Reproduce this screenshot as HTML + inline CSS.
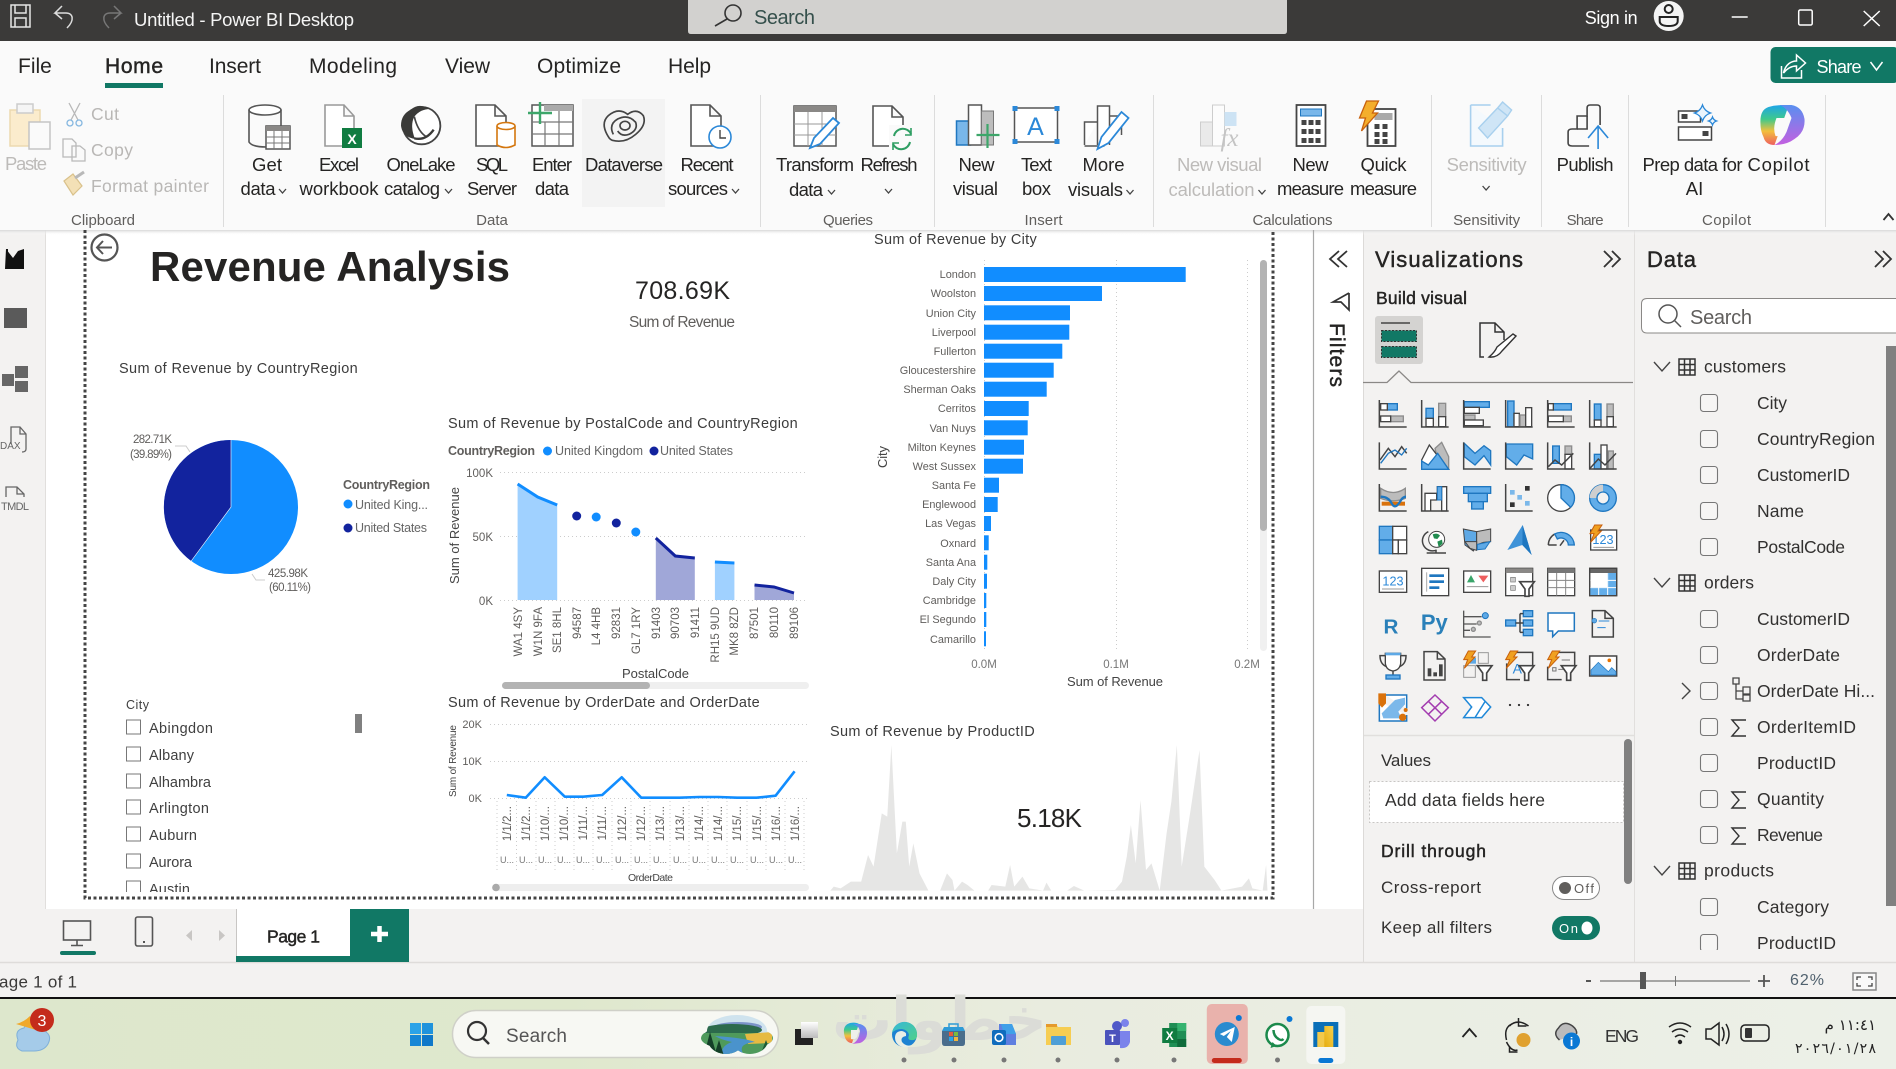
<!DOCTYPE html>
<html lang="en"><head><meta charset="utf-8"><title>Untitled - Power BI Desktop</title>
<style>
html,body{margin:0;padding:0;width:1896px;height:1069px;overflow:hidden;background:#fff}
svg{display:block;position:absolute;left:0;top:0}
text{font-family:"Liberation Sans",sans-serif;fill:#252423}
.tab{font-size:21px;fill:#252423}
.rb{font-size:18.5px;fill:#252423;text-anchor:middle;transform:translateY(-1px)}
.rg{font-size:18.5px;fill:#bdbbb9;text-anchor:middle;transform:translateY(-1px)}
.gl{font-size:15px;fill:#605e5c;text-anchor:middle}
.ttl{font-size:14.5px;fill:#3c3c3c;letter-spacing:.3px}
.ax{font-size:11.5px;fill:#605e5c}
.axe{font-size:11.5px;fill:#605e5c;text-anchor:end}
.cy{font-size:10.9px;fill:#605e5c;text-anchor:end}
.axm{font-size:11.5px;fill:#777;text-anchor:middle}
.sl{font-size:14.5px;fill:#404040}
.tr{font-size:17.5px;fill:#323130}
.sem{stroke:#252423;stroke-width:.45px}
.grid{stroke:#ccc;stroke-width:1;stroke-dasharray:1 3;fill:none}
.k{fill:none;stroke:#444;stroke-width:4.5}
.w{fill:#fff;stroke:#444;stroke-width:4}
.u{fill:#62ade9;stroke:#1f77c0;stroke-width:4}
.g{fill:#bcbcbc;stroke:#8d8d8d;stroke-width:4}
.ic{fill:none;stroke:#555;stroke-width:1.6}
.cb{fill:#f6f5f4;stroke:#777;stroke-width:1.1}
.chev{fill:none;stroke:#444;stroke-width:1.3}
</style></head>
<body>
<svg width="1896" height="1069" viewBox="0 0 1896 1069" xmlns="http://www.w3.org/2000/svg">
<defs>
<linearGradient id="tb" x1="0" x2="1" y1="0" y2="0"><stop offset="0" stop-color="#dde7cc"/><stop offset=".3" stop-color="#dfe8cd"/><stop offset=".55" stop-color="#e9ecdf"/><stop offset="1" stop-color="#ecf0e8"/></linearGradient>
<linearGradient id="sh" x1="0" x2="0" y1="0" y2="1"><stop offset="0" stop-color="#d8d8d8"/><stop offset="1" stop-color="#ffffff" stop-opacity="0"/></linearGradient>
<linearGradient id="cop" x1="0" x2="0" y1="0" y2="1"><stop offset="0" stop-color="#1fa5e8"/><stop offset=".35" stop-color="#3fc98c"/><stop offset=".65" stop-color="#f2c03d"/><stop offset="1" stop-color="#ee5f5f"/></linearGradient>
<linearGradient id="cop2" x1="0" x2="0" y1="0" y2="1"><stop offset="0" stop-color="#5a8ff0"/><stop offset="1" stop-color="#c45fe0"/></linearGradient>
<linearGradient id="edge" x1="0" x2="1" y1="0" y2="1"><stop offset="0" stop-color="#35b8d8"/><stop offset="1" stop-color="#4fd08a"/></linearGradient>
<linearGradient id="pbi" x1="0" x2="1" y1="1" y2="0"><stop offset="0" stop-color="#e6ad10"/><stop offset="1" stop-color="#f6d04d"/></linearGradient>
<linearGradient id="tv" x1="0" x2="0" y1="0" y2="1"><stop offset="0" stop-color="#fff"/><stop offset="1" stop-color="#bbb"/></linearGradient>
<clipPath id="scn"><ellipse cx="737" cy="1038" rx="36" ry="12"/><ellipse cx="737" cy="1031" rx="30" ry="16"/><ellipse cx="726" cy="1040" rx="18" ry="14"/><ellipse cx="750" cy="1040" rx="18" ry="14"/></clipPath>
<clipPath id="sl"><rect x="100" y="700" width="270" height="192"/></clipPath>
<clipPath id="trc"><rect x="1640" y="340" width="246" height="610"/></clipPath>
<g id="fn"><path d="M0 0H44L28 22V44H16V22Z" fill="#fff" stroke="#444" stroke-width="5"/></g>
<g id="bolt"><path d="M20 0H42L30 18H40L8 52L18 26H6Z" fill="#f0a020" stroke="#c8600c" stroke-width="3"/></g>
<polyline id="ch" points="0,0 3.5,4 7,0" class="chev"/>
</defs>

<!-- base panels -->
<rect x="0" y="0" width="1896" height="1069" fill="#fff"/>
<rect x="0" y="230" width="45" height="732" fill="#f3f2f1"/><line x1="45.5" y1="230" x2="45.5" y2="962" stroke="#e1dfdd"/>
<rect x="45" y="909" width="1319" height="53" fill="#f3f2f1"/>
<rect x="1364" y="230" width="270" height="732" fill="#f3f2f1"/><line x1="1363.5" y1="230" x2="1363.5" y2="962" stroke="#dcdad8"/>
<rect x="1634" y="230" width="262" height="732" fill="#f3f2f1"/><line x1="1634.5" y1="230" x2="1634.5" y2="962" stroke="#e1dfdd"/>
<rect x="0" y="962" width="1896" height="36" fill="#f3f2f1"/><line x1="0" y1="962.5" x2="1896" y2="962.5" stroke="#dedcda" stroke-width="1.5"/>
<rect x="0" y="997" width="1896" height="2" fill="#111"/>
<rect x="0" y="999" width="1896" height="70" fill="url(#tb)"/>

<!-- title bar -->
<rect x="0" y="0" width="1896" height="41" fill="#3b3a39"/>
<path d="M11 5H30V27H11Z M15 5V13H26V5 M15 27V18H26V27" fill="none" stroke="#e6e6e6" stroke-width="1.5"/>
<path d="M62 6L55 13H66C73 13 75 20 67 28M55 13L62 19" fill="none" stroke="#ddd" stroke-width="1.5"/>
<path d="M114 6L121 13H110C103 13 101 20 109 28M121 13L114 19" fill="none" stroke="#777" stroke-width="1.5"/>
<text x="134" y="26" font-size="18.5" textLength="220" style="fill:#f5f5f5">Untitled - Power BI Desktop</text>
<path d="M688 0H1287V31Q1287 34 1284 34H691Q688 34 688 31Z" fill="#d2d1cf"/>
<circle cx="733" cy="13" r="8" fill="none" stroke="#333" stroke-width="1.6"/><line x1="727" y1="19" x2="715" y2="26" stroke="#333" stroke-width="1.6"/>
<text x="754" y="24" font-size="20" textLength="61" style="fill:#35504c">Search</text>
<g transform="translate(-3.3,0)">
<text x="1588" y="24" font-size="18" textLength="53" style="fill:#fff">Sign in</text>
<circle cx="1672" cy="16" r="15" fill="#f4f4f4"/><circle cx="1672" cy="9" r="4" fill="none" stroke="#222" stroke-width="2"/><path d="M1663 17H1681V21Q1681 26 1672 26Q1663 26 1663 21Z" fill="none" stroke="#222" stroke-width="2"/>
<line x1="1735" y1="17" x2="1751" y2="17" stroke="#fff" stroke-width="1.5"/>
<rect x="1802" y="10" width="13.5" height="15" rx="1.5" fill="none" stroke="#fff" stroke-width="1.5"/>
<path d="M1867 11L1883 26M1883 11L1867 26" stroke="#fff" stroke-width="1.5"/>
</g>

<!-- ribbon -->
<rect x="0" y="41" width="1896" height="189" fill="#fafafa"/>
<text x="18" y="73" class="tab">File</text>
<text x="105" y="73" class="tab sem" textLength="58">Home</text>
<rect x="105" y="83" width="58" height="5" fill="#117865"/>
<text x="209" y="73" class="tab" textLength="52">Insert</text>
<text x="309" y="73" class="tab" textLength="88">Modeling</text>
<text x="445" y="73" class="tab" textLength="45">View</text>
<text x="537" y="73" class="tab" textLength="84">Optimize</text>
<text x="668" y="73" class="tab" textLength="43">Help</text>
<g transform="translate(-3.5,0)">
<rect x="1774" y="47" width="128" height="36" rx="5" fill="#117865"/>
<path d="M1785 66V78H1805V70M1787 73C1789 64 1795 61 1800 61V55L1809 63L1800 71V66C1795 66 1791 68 1787 73Z" fill="none" stroke="#fff" stroke-width="1.5"/>
<text x="1820" y="73" font-size="18" textLength="45" style="fill:#fff">Share</text>
<path d="M1874 62L1880 70L1886 62" fill="none" stroke="#fff" stroke-width="1.5"/>
</g>

<g stroke="#dcdcdc"><line x1="223.5" y1="95" x2="223.5" y2="227"/><line x1="760.5" y1="95" x2="760.5" y2="227"/><line x1="934.5" y1="95" x2="934.5" y2="227"/><line x1="1153.5" y1="95" x2="1153.5" y2="227"/><line x1="1431.5" y1="95" x2="1431.5" y2="227"/><line x1="1541.5" y1="95" x2="1541.5" y2="227"/><line x1="1628.5" y1="95" x2="1628.5" y2="227"/><line x1="1825.5" y1="95" x2="1825.5" y2="227"/></g>
<rect x="582" y="99" width="83" height="108" fill="#f3f3f3"/>

<!-- clipboard -->
<rect x="10" y="110" width="30" height="36" fill="#fbeccd" stroke="#ecd9b0" stroke-width="1.5"/><rect x="17" y="104" width="16" height="9" fill="#f5f5f5" stroke="#ccc" stroke-width="1.5"/><rect x="29" y="122" width="21" height="27" fill="#fafafa" stroke="#c4c4c4" stroke-width="1.5"/>
<text x="26" y="171" class="rg" textLength="42">Paste</text>
<path d="M69 103L78 120M80 103L71 120" stroke="#b8b8b8" stroke-width="1.3" fill="none"/><circle cx="70" cy="123" r="3" fill="none" stroke="#85b7e0" stroke-width="1.3"/><circle cx="79" cy="123" r="3" fill="none" stroke="#85b7e0" stroke-width="1.3"/>
<text x="91" y="120" font-size="17.5" textLength="28" style="fill:#b9b7b5">Cut</text>
<path d="M63 139H72L76 143V157H63Z M72 146H80L85 150V161H72Z" fill="#fafafa" stroke="#b9b9b9" stroke-width="1.3"/>
<text x="91" y="156" font-size="17.5" textLength="42" style="fill:#b9b7b5">Copy</text>
<path d="M64 181L73 174L82 186L73 195Z" fill="#f3e0b6" stroke="#d9c18b" stroke-width="1.2"/><path d="M75 178L84 172" stroke="#b8b8b8" stroke-width="3"/>
<text x="91" y="192" font-size="17.5" textLength="118" style="fill:#b9b7b5">Format painter</text>
<text x="103" y="225" class="gl" textLength="64">Clipboard</text>

<!-- Get data -->
<ellipse cx="265" cy="110" rx="16" ry="5" fill="#fff" stroke="#555" stroke-width="1.6"/><path d="M249 110V142Q252 147 266 147M281 110V126" fill="none" stroke="#555" stroke-width="1.6"/>
<rect x="266" y="126" width="24" height="23" fill="#fff" stroke="#555" stroke-width="1.5"/><rect x="266" y="126" width="24" height="5" fill="#8a8886"/><path d="M274 131V149M282 131V149M266 137H290M266 143H290" stroke="#777"/>
<text x="267" y="172" class="rb" textLength="30">Get</text><text x="258" y="196" class="rb" textLength="35">data</text><use href="#ch" x="279" y="189"/>
<!-- Excel -->
<path d="M325 105H344L354 116V146H325Z M344 105V116H354" fill="#fff" stroke="#999" stroke-width="1.6"/><rect x="342" y="128" width="20" height="20" fill="#107c41"/><text x="352" y="144" font-size="14" font-weight="bold" text-anchor="middle" style="fill:#fff">X</text>
<text x="339" y="172" class="rb" textLength="40">Excel</text><text x="339" y="196" class="rb" textLength="79">workbook</text>
<!-- OneLake -->
<g transform="translate(395,95) scale(.33333)">
<circle cx="80" cy="92" r="56" fill="#fff" stroke="#444" stroke-width="5.5"/>
<path d="M18 92Q18 58 48 44Q70 22 106 42Q76 42 58 65Q44 92 60 132Q22 126 18 92Z" fill="#3a3a38"/>
<path d="M58 65Q68 108 92 124" fill="none" stroke="#444" stroke-width="5"/><path d="M58 130Q92 138 116 104" fill="none" stroke="#3a3a38" stroke-width="7"/>
</g>
<text x="421" y="172" class="rb" textLength="69">OneLake</text><text x="412" y="196" class="rb" textLength="56">catalog</text><use href="#ch" x="445" y="189"/>
<!-- SQL -->
<path d="M476 105H495L506 116V146H476Z M495 105V116H506" fill="#fff" stroke="#555" stroke-width="1.6"/><path d="M497 126V145Q506 150 515 145V126" fill="#fff" stroke="#d4770f" stroke-width="1.6"/><ellipse cx="506" cy="126" rx="9" ry="3.500" fill="#fff" stroke="#d4770f" stroke-width="1.6"/>
<text x="492" y="172" class="rb" textLength="32">SQL</text><text x="492" y="196" class="rb" textLength="50">Server</text>
<!-- Enter data -->
<rect x="532" y="105" width="41" height="41" fill="#fff" stroke="#555" stroke-width="1.5"/><rect x="544" y="105" width="29" height="6" fill="#aaa"/><path d="M545 122V146M559 111V146M532 122H573M532 134H573" stroke="#777" stroke-width="1.2"/>
<path d="M528 113H552M540 102V124" stroke="#3da66a" stroke-width="2.4"/>
<text x="552" y="172" class="rb" textLength="40">Enter</text><text x="552" y="196" class="rb" textLength="34">data</text>
<!-- Dataverse -->
<g transform="translate(395,95) scale(.33333)" fill="none" stroke="#444" stroke-width="5">
<path d="M640 125Q615 85 640 62Q670 36 698 58Q725 38 745 62Q756 90 722 118Q690 146 652 136Q644 133 640 125Z"/>
<path d="M655 118Q640 88 668 72Q700 56 722 82Q730 105 702 118Q680 126 668 108"/><ellipse cx="690" cy="92" rx="15" ry="13"/>
</g>
<text x="624" y="172" class="rb" textLength="78">Dataverse</text>
<!-- Recent -->
<path d="M691 105H710L721 116V146H691Z M710 105V116H721" fill="#fff" stroke="#555" stroke-width="1.6"/><circle cx="720" cy="137" r="11" fill="#fff" stroke="#2b88d8" stroke-width="1.6"/><path d="M720 130V138H726" fill="none" stroke="#444" stroke-width="1.4"/>
<text x="707" y="172" class="rb" textLength="53">Recent</text><text x="698" y="196" class="rb" textLength="60">sources</text><use href="#ch" x="732" y="189"/>
<text x="492" y="225" class="gl">Data</text>
<!-- Transform -->
<rect x="794" y="106" width="42" height="40" fill="#fff" stroke="#555" stroke-width="1.5"/><rect x="794" y="106" width="42" height="6" fill="#8a8886"/><path d="M808 112V146M822 112V146M794 124H836M794 135H836" stroke="#999"/>
<path d="M810 148L814 138L833 118L839 123L820 144Z" fill="#fff" stroke="#2b88d8" stroke-width="1.8"/>
<text x="815" y="172" class="rb" textLength="78">Transform</text><text x="806" y="197" class="rb" textLength="34">data</text><use href="#ch" x="828" y="190"/>
<!-- Refresh -->
<path d="M873 106H892L903 117V146H873Z M892 106V117H903" fill="#fff" stroke="#555" stroke-width="1.6"/><rect x="889" y="125" width="26" height="26" fill="#fafafa"/><path d="M894 136A9 9 0 0 1 911 134M910 142A9 9 0 0 1 893 144" fill="none" stroke="#2f9e63" stroke-width="2"/><path d="M911 128V135H905M893 150V143H899" fill="none" stroke="#2f9e63" stroke-width="1.6"/>
<text x="889" y="172" class="rb" textLength="57">Refresh</text><use href="#ch" x="885" y="189"/>
<text x="848" y="225" class="gl" textLength="50">Queries</text>
<!-- Insert group -->
<g transform="translate(-.5,0)">
<rect x="957" y="121" width="14" height="24" fill="#79b7ea" stroke="#1f77c0" stroke-width="1.5"/><rect x="969" y="105" width="13" height="40" fill="#fff" stroke="#555" stroke-width="1.5"/><rect x="982" y="111" width="12" height="34" fill="#bdbdbd" stroke="#777" stroke-width="1"/><path d="M977 135H1000M988 124V148" stroke="#3da66a" stroke-width="2.2"/>
<text x="977" y="172" class="rb" textLength="36">New</text><text x="976" y="196" class="rb" textLength="45">visual</text>
<rect x="1015" y="108" width="43" height="34" fill="#fff" stroke="#555" stroke-width="1.5"/><g fill="#2b88d8"><rect x="1013" y="106" width="5" height="5"/><rect x="1055" y="106" width="5" height="5"/><rect x="1013" y="139" width="5" height="5"/><rect x="1055" y="139" width="5" height="5"/></g><text x="1036" y="135" font-size="25" text-anchor="middle" style="fill:#2b88d8">A</text>
<text x="1037" y="172" class="rb" textLength="31">Text</text><text x="1037" y="196" class="rb" textLength="29">box</text>
<path d="M1085 145V122H1098M1098 145V106H1110V145M1110 116H1122V135M1085 146H1105" fill="#fff" stroke="#555" stroke-width="1.5"/><path d="M1098 149L1102 137L1122 112L1129 118L1109 143Z" fill="#fff" stroke="#2b88d8" stroke-width="1.8"/>
<text x="1104" y="172" class="rb" textLength="42">More</text><text x="1096" y="197" class="rb" textLength="55">visuals</text><use href="#ch" x="1127" y="190"/>
<text x="1044" y="225" class="gl" textLength="38">Insert</text>
</g>
<!-- Calculations group -->
<g transform="translate(-1.5,0)">
<g opacity=".55"><rect x="1202" y="122" width="12" height="24" fill="#ddd" stroke="#aaa"/><rect x="1214" y="105" width="12" height="41" fill="#fff" stroke="#aaa"/><rect x="1226" y="112" width="12" height="14" fill="#a9d2f0"/><text x="1231" y="146" font-size="25" font-style="italic" text-anchor="middle" style="fill:#999;font-family:'Liberation Serif',serif">fx</text></g>
<text x="1221" y="172" class="rg" textLength="85">New visual</text><text x="1213" y="197" class="rg" textLength="86">calculation</text><use href="#ch" x="1260" y="190" style="stroke:#bbb"/>
<rect x="1298" y="105" width="29" height="41" fill="#fff" stroke="#444" stroke-width="1.8"/><rect x="1302" y="109" width="21" height="7" fill="#79b7ea" stroke="#1f77c0"/><g fill="#444"><rect x="1303" y="120" width="5" height="5"/><rect x="1310" y="120" width="5" height="5"/><rect x="1317" y="120" width="5" height="5"/><rect x="1303" y="129" width="5" height="5"/><rect x="1310" y="129" width="5" height="5"/><rect x="1317" y="129" width="5" height="5"/><rect x="1303" y="138" width="5" height="5"/><rect x="1310" y="138" width="5" height="5"/><rect x="1317" y="138" width="5" height="5"/></g>
<text x="1312" y="172" class="rb" textLength="36">New</text><text x="1312" y="196" class="rb" textLength="67">measure</text>
<rect x="1369" y="109" width="28" height="37" fill="#fff" stroke="#444" stroke-width="1.8"/><rect x="1376" y="113" width="18" height="7" fill="#aaa"/><g fill="#444"><rect x="1376" y="124" width="5" height="5"/><rect x="1384" y="124" width="5" height="5"/><rect x="1376" y="132" width="5" height="5"/><rect x="1384" y="132" width="5" height="5"/><rect x="1376" y="139" width="5" height="5"/><rect x="1384" y="139" width="5" height="5"/></g><path d="M1368 101H1380L1374 113H1379L1363 131L1367 118H1361Z" fill="#f4ae2c" stroke="#c8600c" stroke-width="1.3"/>
<text x="1385" y="172" class="rb" textLength="46">Quick</text><text x="1385" y="196" class="rb" textLength="67">measure</text>
<text x="1294" y="225" class="gl" textLength="80">Calculations</text>
</g>
<!-- Sensitivity -->
<g transform="translate(-2.4,0)">
<path d="M1473 105H1493M1473 105V146H1505V128" fill="#f4f9fd" stroke="#a8d0ee" stroke-width="1.6"/><path d="M1481 128L1500 108L1510 116L1490 138Z M1500 108L1505 102L1514 110L1510 116" fill="#cfe5f6" stroke="#a8d0ee" stroke-width="1.4"/>
<text x="1489" y="172" class="rg" textLength="80">Sensitivity</text><use href="#ch" x="1485" y="186" style="stroke:#bbb"/>
<text x="1489" y="225" class="gl" textLength="67">Sensitivity</text>
</g>
<!-- Publish -->
<g transform="translate(-2.9,0)">
<path d="M1571 132Q1571 129 1575 129H1580V116Q1580 116 1590 116V108Q1590 105 1593 105H1600Q1603 105 1603 108V125M1571 132V143Q1571 146 1575 146H1592" fill="none" stroke="#444" stroke-width="1.6"/><path d="M1580 129H1590V116M1600 125" fill="none" stroke="#444" stroke-width="1.6"/><path d="M1601 149V127M1591 138L1601 126L1611 138" fill="none" stroke="#2b88d8" stroke-width="1.6"/>
<text x="1588" y="172" class="rb" textLength="57">Publish</text><text x="1588" y="225" class="gl" textLength="37">Share</text>
</g>
<!-- Copilot -->
<g transform="translate(-3.5,0)">
<rect x="1682" y="111" width="22" height="11" fill="#fff" stroke="#444" stroke-width="1.5"/><rect x="1685" y="114" width="6" height="5" fill="#444"/><rect x="1682" y="127" width="33" height="13" fill="#fff" stroke="#444" stroke-width="1.5"/><rect x="1706" y="131" width="6" height="5" fill="#444"/>
<path d="M1706 105Q1708 111 1714 113Q1708 115 1706 121Q1704 115 1698 113Q1704 111 1706 105ZM1716 117Q1717 120 1720 121Q1717 122 1716 125Q1715 122 1712 121Q1715 120 1716 117Z" fill="#eaf4fc" stroke="#2b88d8" stroke-width="1.3"/>
<text x="1696" y="172" class="rb" textLength="100">Prep data for</text><text x="1782" y="172" class="rb" textLength="62">Copilot</text><text x="1698" y="196" class="rb">AI</text>
<path d="M1764 124Q1763 110 1772 107Q1781 104 1792 106L1778 145Q1769 145 1767 137Q1764 131 1764 124Z" fill="url(#cop)"/>
<path d="M1783 105H1795Q1806 107 1808 119Q1809 132 1798 139Q1790 145 1778 145Q1786 141 1790 132L1795 118Q1791 108 1783 105Z" fill="url(#cop2)"/>
<path d="M1780 118H1794L1790 131Q1786 137 1779 136Q1776 128 1780 118Z" fill="#fafafa"/>
<text x="1730" y="225" class="gl" textLength="49">Copilot</text>
<path d="M1887 220L1892 214L1897 220" fill="none" stroke="#333" stroke-width="1.8"/>
</g>
<rect x="0" y="230" width="1896" height="5" fill="url(#sh)"/>

<!-- left rail -->
<path d="M6 249L13 258L18 251L24 249V269H5Z" fill="#111"/><path d="M7 249V268" stroke="#111" stroke-width="2"/>
<rect x="4" y="308" width="23" height="20" fill="#5a5a5a"/>
<g fill="#666"><rect x="15" y="366" width="13" height="12"/><rect x="2" y="374" width="12" height="12"/><rect x="15" y="381" width="13" height="11"/></g>
<path d="M11 444V427H20L26 434V449Q26 452 22 452M20 427V434H26" fill="none" stroke="#666" stroke-width="1.3"/><text x="0" y="449" font-size="10" style="fill:#666">DAX</text>
<path d="M6 497V487H17L24 494V497M17 487V494H24" fill="none" stroke="#666" stroke-width="1.3"/><text x="1" y="510" font-size="11" textLength="28" style="fill:#666">TMDL</text>

<!-- canvas border -->
<path d="M85 230V898H1273V230" fill="none" stroke="#444" stroke-width="3" stroke-dasharray="3 2.5"/>
<circle cx="104.500" cy="247.500" r="13" fill="none" stroke="#555" stroke-width="2.2"/><path d="M112 247.500H97M103 241L97 247.500L103 254" fill="none" stroke="#555" stroke-width="2"/>
<text x="150" y="281" font-size="42" font-weight="bold" textLength="360" style="fill:#252423">Revenue Analysis</text>
<text x="635" y="299" font-size="25" textLength="95">708.69K</text>
<text x="629" y="327" font-size="15.5" textLength="106" style="fill:#605e5c">Sum of Revenue</text>

<!-- pie -->
<text x="119" y="373" class="ttl" textLength="239">Sum of Revenue by CountryRegion</text>
<circle cx="231" cy="507" r="67" fill="#118dff"/>
<path d="M231 507V440A67 67 0 0 0 191.200 561Z" fill="#12239e"/>
<path d="M231 440V507L191.200 561" fill="none" stroke="#fff" stroke-width=".6"/>
<text x="133" y="443" class="ax" textLength="39">282.71K</text><text x="130" y="458" class="ax" textLength="42">(39.89%)</text>
<path d="M175 446H186L190 452M252 574L256 580H265" fill="none" stroke="#ccc"/>
<text x="268" y="577" class="ax" textLength="40">425.98K</text><text x="269" y="591" class="ax" textLength="42">(60.11%)</text>
<text x="343" y="489" font-size="12.500" font-weight="bold" textLength="87" style="fill:#605e5c">CountryRegion</text>
<circle cx="348" cy="504" r="4.500" fill="#118dff"/><text x="355" y="509" font-size="12.500" textLength="73" style="fill:#666">United King...</text>
<circle cx="348" cy="528" r="4.500" fill="#12239e"/><text x="355" y="532" font-size="12.500" textLength="72" style="fill:#666">United States</text>

<!-- postal chart -->
<text x="448" y="428" class="ttl" textLength="350">Sum of Revenue by PostalCode and CountryRegion</text>
<text x="448" y="455" font-size="12.500" font-weight="bold" textLength="87" style="fill:#605e5c">CountryRegion</text>
<circle cx="547.500" cy="451" r="4.500" fill="#118dff"/><text x="555" y="455" font-size="12.500" textLength="88" style="fill:#666">United Kingdom</text>
<circle cx="654" cy="451" r="4.500" fill="#12239e"/><text x="660" y="455" font-size="12.500" textLength="73" style="fill:#666">United States</text>
<line x1="500" y1="472.500" x2="808" y2="472.500" class="grid"/><line x1="500" y1="536.500" x2="808" y2="536.500" class="grid"/><line x1="500" y1="600.500" x2="808" y2="600.500" class="grid"/>
<text x="493" y="477" class="axe">100K</text><text x="493" y="541" class="axe">50K</text><text x="493" y="605" class="axe">0K</text>
<text transform="translate(459,584) rotate(-90)" font-size="13" textLength="97" style="fill:#444">Sum of Revenue</text>
<polygon points="517.600,484 537.700,497 557.200,505 557.200,600 517.600,600" fill="#a0d1ff"/><polyline points="517.600,484 537.700,497 557.200,505" fill="none" stroke="#118dff" stroke-width="3"/>
<polygon points="655.800,538 675.300,556 694.800,558 694.800,600 655.800,600" fill="#a0a7d8"/><polyline points="655.800,538 675.300,556 694.800,558" fill="none" stroke="#12239e" stroke-width="3"/>
<polygon points="714.900,562 734.400,563 734.400,600 714.900,600" fill="#a0d1ff"/><polyline points="714.900,562 734.400,563" fill="none" stroke="#118dff" stroke-width="3"/>
<polygon points="754.500,585 774,587 794,593 794,600 754.500,600" fill="#a0a7d8"/><polyline points="754.500,585 774,587 794,593" fill="none" stroke="#12239e" stroke-width="3"/>
<circle cx="576.700" cy="516" r="4.500" fill="#12239e"/><circle cx="596.200" cy="517" r="4.500" fill="#118dff"/><circle cx="616.300" cy="523" r="4.500" fill="#12239e"/><circle cx="635.800" cy="532" r="4.500" fill="#118dff"/>
<text transform="translate(522,607) rotate(-90)" class="axe">WA1 4SY</text>
<text transform="translate(542,607) rotate(-90)" class="axe">W1N 9FA</text>
<text transform="translate(561,607) rotate(-90)" class="axe">SE1 8HL</text>
<text transform="translate(581,607) rotate(-90)" class="axe">94587</text>
<text transform="translate(600,607) rotate(-90)" class="axe">L4 4HB</text>
<text transform="translate(620,607) rotate(-90)" class="axe">92831</text>
<text transform="translate(640,607) rotate(-90)" class="axe">GL7 1RY</text>
<text transform="translate(660,607) rotate(-90)" class="axe">91403</text>
<text transform="translate(679,607) rotate(-90)" class="axe">90703</text>
<text transform="translate(699,607) rotate(-90)" class="axe">91411</text>
<text transform="translate(719,607) rotate(-90)" class="axe">RH15 9UD</text>
<text transform="translate(738,607) rotate(-90)" class="axe">MK8 8ZD</text>
<text transform="translate(758,607) rotate(-90)" class="axe">87501</text>
<text transform="translate(778,607) rotate(-90)" class="axe">80110</text>
<text transform="translate(798,607) rotate(-90)" class="axe">89106</text>
<text x="622" y="678" font-size="13" textLength="67" style="fill:#444">PostalCode</text>
<rect x="502" y="682" width="307" height="7" rx="3.500" fill="#efefef"/><rect x="502" y="682" width="148" height="7" rx="3.500" fill="#b3b3b3"/>

<!-- slicer -->
<text x="126" y="709" font-size="12.500" textLength="23" style="fill:#404040">City</text>
<g clip-path="url(#sl)" fill="none">
<g stroke="#777" stroke-width="1"><rect x="126.500" y="720" width="14" height="14"/><rect x="126.500" y="747" width="14" height="14"/><rect x="126.500" y="774" width="14" height="14"/><rect x="126.500" y="800" width="14" height="14"/><rect x="126.500" y="827" width="14" height="14"/><rect x="126.500" y="854" width="14" height="14"/><rect x="126.500" y="881" width="14" height="14"/></g>
<text x="149" y="733" class="sl" textLength="64">Abingdon</text><text x="149" y="760" class="sl" textLength="45">Albany</text><text x="149" y="787" class="sl" textLength="62">Alhambra</text><text x="149" y="813" class="sl" textLength="60">Arlington</text><text x="149" y="840" class="sl" textLength="48">Auburn</text><text x="149" y="867" class="sl" textLength="43">Aurora</text><text x="149" y="894" class="sl" textLength="41">Austin</text>
</g>
<rect x="355" y="714" width="7" height="19" fill="#808080"/>

<!-- order date chart -->
<text x="448" y="707" class="ttl" textLength="312">Sum of Revenue by OrderDate and OrderDate</text>
<line x1="490" y1="724.500" x2="808" y2="724.500" class="grid"/><line x1="490" y1="761.500" x2="808" y2="761.500" class="grid"/><line x1="490" y1="798.500" x2="808" y2="798.500" class="grid"/>
<text x="482" y="728" font-size="11" text-anchor="end" style="fill:#605e5c">20K</text><text x="482" y="765" font-size="11" text-anchor="end" style="fill:#605e5c">10K</text><text x="482" y="802" font-size="11" text-anchor="end" style="fill:#605e5c">0K</text>
<text transform="translate(456,797) rotate(-90)" font-size="10" textLength="72" style="fill:#444">Sum of Revenue</text>
<polyline points="506.800,795 525.700,797.700 544.700,777.300 564.800,796.700 583.200,796.700 602.200,795 621.700,777.300 641.200,797.700 660.200,797.700 679.700,797.700 699.200,797 718.200,797 737.100,797.700 756.600,797.700 775.600,795.700 794.600,771.300" fill="none" stroke="#118dff" stroke-width="2.600" stroke-linejoin="round"/>
<path class="grid" d="M497 801V871M516.500 801V871M536 801V871M555 801V871M574 801V871M593 801V871M612 801V871M631 801V871M650 801V871M670 801V871M689 801V871M708 801V871M727 801V871M747 801V871M766 801V871M785 801V871M804 801V871"/>
<text transform="translate(511,806) rotate(-90)" class="axe">1/1/2...</text><text transform="translate(530,806) rotate(-90)" class="axe">1/1/2...</text><text transform="translate(549,806) rotate(-90)" class="axe">1/10/...</text><text transform="translate(568,806) rotate(-90)" class="axe">1/10/...</text><text transform="translate(587,806) rotate(-90)" class="axe">1/11/...</text><text transform="translate(606,806) rotate(-90)" class="axe">1/11/...</text><text transform="translate(626,806) rotate(-90)" class="axe">1/12/...</text><text transform="translate(645,806) rotate(-90)" class="axe">1/12/...</text><text transform="translate(664,806) rotate(-90)" class="axe">1/13/...</text><text transform="translate(684,806) rotate(-90)" class="axe">1/13/...</text><text transform="translate(703,806) rotate(-90)" class="axe">1/14/...</text><text transform="translate(722,806) rotate(-90)" class="axe">1/14/...</text><text transform="translate(741,806) rotate(-90)" class="axe">1/15/...</text><text transform="translate(761,806) rotate(-90)" class="axe">1/15/...</text><text transform="translate(780,806) rotate(-90)" class="axe">1/16/...</text><text transform="translate(799,806) rotate(-90)" class="axe">1/16/...</text>
<g font-size="9" text-anchor="middle">
<text x="507" y="863" style="fill:#777">U...</text><text x="526" y="863" style="fill:#777">U...</text><text x="545" y="863" style="fill:#777">U...</text><text x="564" y="863" style="fill:#777">U...</text><text x="583" y="863" style="fill:#777">U...</text><text x="603" y="863" style="fill:#777">U...</text><text x="622" y="863" style="fill:#777">U...</text><text x="641" y="863" style="fill:#777">U...</text><text x="660" y="863" style="fill:#777">U...</text><text x="680" y="863" style="fill:#777">U...</text><text x="699" y="863" style="fill:#777">U...</text><text x="718" y="863" style="fill:#777">U...</text><text x="737" y="863" style="fill:#777">U...</text><text x="757" y="863" style="fill:#777">U...</text><text x="776" y="863" style="fill:#777">U...</text><text x="795" y="863" style="fill:#777">U...</text>
</g>
<text x="628" y="881" font-size="10.500" textLength="45" style="fill:#444">OrderDate</text>
<rect x="492" y="884" width="317" height="7" rx="3.500" fill="#eee"/><circle cx="496" cy="887.500" r="3.800" fill="#aaa"/>

<!-- product chart -->
<text x="830" y="736" class="ttl" textLength="205">Sum of Revenue by ProductID</text>
<g transform="translate(820,700) scale(.6863,.3333)"><polygon fill="#e6e6e5" points="15,572 20,560 30,565 45,545 60,545 70,465 78,500 90,340 98,350 104,135 112,460 120,365 125,365 130,500 136,430 145,520 158,572 175,572 185,520 193,540 196,572 207,545 215,555 225,572 245,572 250,555 270,560 277,495 283,560 295,530 305,565 325,572 330,548 337,572 360,572 370,558 385,572 430,570 440,545 447,470 453,375 460,490 467,300 475,510 483,490 495,572 505,400 512,305 520,135 527,500 540,330 553,150 560,500 575,540 585,572 615,560 625,535 630,565 645,572 650,495 652,572"/></g>
<text x="1017" y="827" font-size="26" textLength="65">5.18K</text>

<!-- city chart -->
<text x="874" y="244" class="ttl" textLength="163">Sum of Revenue by City</text>
<path d="M984.500 260V650M1116.500 260V650M1247.500 260V650" class="grid"/>
<g fill="#118dff"><rect x="984" y="267" width="201.700" height="15"/><rect x="984" y="286" width="118" height="15"/><rect x="984" y="305.300" width="86" height="15"/><rect x="984" y="324.700" width="85.300" height="15"/><rect x="984" y="343.700" width="78.300" height="15"/><rect x="984" y="362.700" width="69.700" height="15"/><rect x="984" y="381.700" width="62.700" height="15"/><rect x="984" y="401" width="44.700" height="15"/><rect x="984" y="420.300" width="43.700" height="15"/><rect x="984" y="439.700" width="40" height="15"/><rect x="984" y="458.700" width="39" height="15"/><rect x="984" y="477.700" width="15" height="15"/><rect x="984" y="497" width="13.700" height="15"/><rect x="984" y="516" width="7" height="15"/><rect x="984" y="535.300" width="4.700" height="15"/><rect x="984" y="554.700" width="3.300" height="15"/><rect x="984" y="573.700" width="3" height="15"/><rect x="984" y="593" width="2.300" height="15"/><rect x="984" y="612" width="2.300" height="15"/><rect x="984" y="631.300" width="2" height="15"/></g>
<text x="976" y="278" class="cy">London</text><text x="976" y="297" class="cy">Woolston</text><text x="976" y="317" class="cy">Union City</text><text x="976" y="336" class="cy">Liverpool</text><text x="976" y="355" class="cy">Fullerton</text><text x="976" y="374" class="cy">Gloucestershire</text><text x="976" y="393" class="cy">Sherman Oaks</text><text x="976" y="412" class="cy">Cerritos</text><text x="976" y="432" class="cy">Van Nuys</text><text x="976" y="451" class="cy">Milton Keynes</text><text x="976" y="470" class="cy">West Sussex</text><text x="976" y="489" class="cy">Santa Fe</text><text x="976" y="508" class="cy">Englewood</text><text x="976" y="527" class="cy">Las Vegas</text><text x="976" y="547" class="cy">Oxnard</text><text x="976" y="566" class="cy">Santa Ana</text><text x="976" y="585" class="cy">Daly City</text><text x="976" y="604" class="cy">Cambridge</text><text x="976" y="623" class="cy">El Segundo</text><text x="976" y="643" class="cy">Camarillo</text>
<text x="984" y="668" class="axm">0.0M</text><text x="1116" y="668" class="axm">0.1M</text><text x="1247" y="668" class="axm">0.2M</text>
<text x="1067" y="686" font-size="13" textLength="96" style="fill:#444">Sum of Revenue</text>
<text transform="translate(887,468) rotate(-90)" font-size="13" textLength="22" style="fill:#444">City</text>
<rect x="1260" y="260" width="7" height="391" rx="3.500" fill="#f0f0f0"/><rect x="1260" y="260" width="7" height="271" rx="3.500" fill="#b3b3b3"/>

<!-- filters -->
<line x1="1313.500" y1="230" x2="1313.500" y2="909" stroke="#a8a8a8" stroke-width="1.200"/>
<path d="M1339 251L1330 259L1339 267M1347 251L1338 259L1347 267" fill="none" stroke="#333" stroke-width="1.800"/>
<path d="M1349 293V310L1341 302H1333L1349 293" fill="none" stroke="#333" stroke-width="1.700"/>
<text transform="translate(1330,323) rotate(90)" font-size="21" class="sem" textLength="64" style="fill:#252423">Filters</text>

<!-- visualizations -->
<text x="1375" y="267" font-size="22" class="sem" textLength="148">Visualizations</text>
<path d="M1604 251L1612 259L1604 267M1612 251L1620 259L1612 267" fill="none" stroke="#333" stroke-width="1.800"/>
<text x="1376" y="304" font-size="17.500" class="sem" textLength="91">Build visual</text>
<rect x="1375" y="316" width="48" height="48" rx="3" fill="#d4d3d1"/>
<line x1="1381" y1="323" x2="1410" y2="323" stroke="#444" stroke-width="1.500"/><rect x="1381.500" y="330.500" width="35" height="11" fill="#117865" stroke="#333" stroke-dasharray="2 1.500"/><rect x="1381.500" y="346.500" width="35" height="11" fill="#117865" stroke="#333" stroke-dasharray="2 1.500"/>
<path d="M1484 357H1480V323H1495L1504 332V340M1495 323V332H1504" fill="none" stroke="#333" stroke-width="1.500"/><path d="M1516 336L1502 351Q1497 358 1489 357Q1495 352 1497 347L1513 334Z" fill="#fff" stroke="#333" stroke-width="1.400"/>
<path d="M1363 382.500H1387L1399 371L1411 382.500H1633" fill="none" stroke="#8a8886" stroke-width="1.300"/>

<g transform="translate(1360,385) scale(.33333)">
<!-- row 1 -->
<rect x="82" y="56" width="30" height="19" class="u"/><rect x="62" y="56" width="20" height="19" class="w"/><rect x="92" y="93" width="38" height="17" class="g"/><rect x="62" y="93" width="30" height="17" class="w"/><path d="M58 45V126H140" class="k"/>
<rect x="198" y="70" width="22" height="30" class="u"/><rect x="198" y="100" width="22" height="25" class="w"/><rect x="236" y="55" width="21" height="40" class="g"/><rect x="236" y="95" width="21" height="30" class="w"/><path d="M185 45V126H266" class="k"/>
<rect x="313" y="50" width="75" height="17" class="u"/><rect x="313" y="67" width="45" height="18" class="w"/><rect x="313" y="90" width="32" height="15" class="g"/><rect x="313" y="105" width="57" height="17" class="w"/><path d="M311 45V126H392" class="k"/>
<rect x="443" y="48" width="19" height="77" class="u"/><rect x="462" y="85" width="16" height="40" class="w"/><rect x="480" y="90" width="17" height="35" class="g"/><rect x="497" y="68" width="18" height="57" class="w"/><path d="M437 45V126H518" class="k"/>
<rect x="580" y="56" width="54" height="19" class="u"/><rect x="565" y="56" width="15" height="19" class="w"/><rect x="610" y="93" width="24" height="17" class="g"/><rect x="565" y="93" width="45" height="17" class="w"/><path d="M563 45V126H644" class="k"/>
<rect x="703" y="57" width="20" height="48" class="u"/><rect x="703" y="105" width="20" height="20" class="w"/><rect x="741" y="57" width="19" height="38" class="g"/><rect x="741" y="95" width="19" height="30" class="w"/><path d="M689 45V126H770" class="k"/>
<!-- row 2 -->
<polyline points="60,225 85,190 105,215 125,185 140,205" class="k"/><polyline points="62,235 85,205 105,195 125,210 140,190" fill="none" stroke="#1f77c0" stroke-width="4"/><path d="M58 172V252H140" class="k"/>
<polygon points="225,190 245,172 266,215 266,253 240,253" class="g"/><polygon points="185,225 208,180 235,215 266,253 185,253" class="w"/><polygon points="185,253 185,228 205,240 233,205 266,253" class="u"/>
<polygon points="313,175 345,205 372,182 392,197 392,240 372,212 345,240 313,215" class="u"/><path d="M311 172V252H392" class="k"/>
<polygon points="439,177 518,177 518,222 492,210 470,240 439,215" class="u"/><path d="M437 172V252H518" class="k"/>
<rect x="578" y="183" width="20" height="52" class="u"/><rect x="615" y="183" width="20" height="25" class="g"/><rect x="615" y="208" width="20" height="44" class="w"/><polyline points="565,245 585,225 605,240 640,205" class="k"/><path d="M563 172V252H644" class="k"/>
<rect x="703" y="208" width="20" height="44" class="u"/><rect x="723" y="180" width="18" height="72" class="w"/><rect x="745" y="198" width="15" height="54" class="g"/><polyline points="690,250 715,222 735,240 768,205" class="k"/><path d="M689 172V252H770" class="k"/>
<!-- row 3 -->
<path d="M62 310Q100 335 136 310V340Q100 355 62 340Z" class="g"/><rect x="65" y="350" width="70" height="12" fill="#d9720c"/><path d="M62 335Q85 335 95 355Q105 375 120 350Q128 335 138 335" fill="none" stroke="#1f77c0" stroke-width="7"/><path d="M58 297V378H140" class="k"/>
<path d="M195 378V325H230V345H212V378M232 345V305H245V345M245 305H260V378H245V345" fill="#fff" stroke="#444" stroke-width="4"/><rect x="232" y="305" width="13" height="40" fill="#5ea9e6" stroke="#1f77c0" stroke-width="3"/><path d="M185 297V378H266" class="k"/>
<rect x="311" y="305" width="81" height="20" class="u"/><rect x="325" y="325" width="57" height="25" class="u"/><rect x="335" y="350" width="35" height="22" class="u"/>
<path d="M437 297V378H518" class="k"/><rect x="450" y="315" width="14" height="14" fill="#7bb8ea"/><rect x="495" y="303" width="14" height="14" fill="#333"/><rect x="472" y="330" width="14" height="14" fill="#7bb8ea"/><rect x="450" y="352" width="14" height="14" fill="#333"/><rect x="495" y="348" width="14" height="14" fill="#7bb8ea"/>
<circle cx="603" cy="339" r="40" class="w"/><path d="M603 339V299A40 40 0 0 1 632 367Z" class="u"/>
<circle cx="729" cy="339" r="40" class="u"/><path d="M729 299A40 40 0 0 0 689 339H711A18 18 0 0 1 729 321Z" fill="#cfcfcf"/><circle cx="729" cy="339" r="18" fill="#f3f2f1" stroke="#1f77c0" stroke-width="4"/>
<!-- row 4 -->
<rect x="58" y="424" width="40" height="41" class="u"/><rect x="58" y="465" width="40" height="41" class="u"/><rect x="98" y="424" width="42" height="41" class="w"/><rect x="98" y="465" width="17" height="41" class="w"/><rect x="115" y="465" width="25" height="41" class="w"/>
<path d="M205 440A30 30 0 0 0 230 495M228 495V503M200 504H258" class="k"/><circle cx="230" cy="463" r="24" fill="#fff" stroke="#444" stroke-width="3"/><path d="M218 448Q232 442 240 452L232 462L222 460ZM232 470L246 464L248 476L236 486Z" fill="#218c4f"/>
<path d="M310 432L350 440V480L340 498L315 480Z" fill="#5ea9e6" stroke="#444" stroke-width="3"/><path d="M350 440L392 432V470L370 472L350 480Z" fill="#bcbcbc" stroke="#444" stroke-width="3"/><path d="M315 470L350 470L350 496L330 490Z" fill="#bcbcbc" stroke="#444" stroke-width="3"/><path d="M352 478L390 470L375 492L352 494Z" fill="#5ea9e6" stroke="#1f77c0" stroke-width="3"/>
<polygon points="488,420 515,510 487,480 442,495" fill="#3f93d8"/><polygon points="488,420 515,510 487,480" fill="#1f77c0"/>
<path d="M565 480A40 40 0 0 1 584 447" class="k"/><path d="M584 447A40 40 0 0 1 643 480H625A22 22 0 0 0 592 462Z" class="u"/><path d="M565 480H590M600 482L612 466" class="k"/>
<rect x="692" y="435" width="78" height="60" class="w"/><text x="729" y="477" font-size="38" text-anchor="middle" style="fill:#2b88d8">123</text><line x1="700" y1="487" x2="762" y2="487" stroke="#999" stroke-width="3"/><use href="#bolt" x="684" y="420"/>
<!-- row 5 -->
<rect x="58" y="558" width="82" height="64" class="w"/><text x="99" y="602" font-size="38" text-anchor="middle" style="fill:#2b88d8">123</text><line x1="66" y1="612" x2="132" y2="612" stroke="#999" stroke-width="3"/>
<rect x="185" y="550" width="81" height="82" class="w"/><path d="M200 562V620" stroke="#aaa" stroke-width="3"/><rect x="208" y="568" width="44" height="8" fill="#1f77c0"/><rect x="208" y="586" width="44" height="8" fill="#1f77c0"/><rect x="208" y="604" width="30" height="8" fill="#1f77c0"/>
<rect x="311" y="558" width="81" height="64" class="w"/><polygon points="333,570 345,592 321,592" fill="#3aa56a"/><polygon points="355,572 385,572 370,592" fill="#ee5f5f"/><line x1="320" y1="605" x2="385" y2="605" stroke="#999" stroke-width="3"/>
<rect x="437" y="550" width="81" height="82" class="w"/><rect x="437" y="550" width="81" height="14" fill="#8a8886"/><rect x="452" y="577" width="14" height="14" fill="#ccc" stroke="#777" stroke-width="2"/><rect x="452" y="602" width="14" height="14" fill="#ccc" stroke="#777" stroke-width="2"/><use href="#fn" x="479" y="590"/>
<rect x="563" y="550" width="81" height="82" class="w"/><rect x="563" y="550" width="81" height="14" fill="#777"/><path d="M590 564V632M617 564V632M563 586H644M563 608H644" stroke="#888" stroke-width="3"/>
<rect x="689" y="550" width="81" height="82" class="w"/><rect x="689" y="550" width="81" height="14" fill="#666"/><rect x="741" y="564" width="29" height="68" fill="#62ade9"/><rect x="689" y="606" width="81" height="26" fill="#62ade9"/><path d="M716 564V632M743 564V632M689 586H770M689 608H770" stroke="#fff" stroke-width="3"/><rect x="689" y="550" width="81" height="82" fill="none" stroke="#444" stroke-width="4"/>
<!-- row 6 -->
<text x="93" y="745" font-size="62" font-weight="bold" text-anchor="middle" style="fill:#2a80b9">R</text>
<text x="223" y="735" font-size="66" font-weight="bold" text-anchor="middle" style="fill:#2a80b9">Py</text>
<path d="M311 677V756H392M312 695H365M312 717H350M312 736H330" fill="none" stroke="#555" stroke-width="4"/><circle cx="376" cy="692" r="9" fill="#5ea9e6" stroke="#1f77c0" stroke-width="3"/><circle cx="358" cy="714" r="6" class="g"/><circle cx="340" cy="733" r="6" class="g"/>
<rect x="437" y="705" width="30" height="18" class="u"/><rect x="490" y="677" width="28" height="18" class="u"/><rect x="490" y="705" width="28" height="18" class="u"/><rect x="490" y="733" width="28" height="19" class="u"/><path d="M467 714H490M480 686V742M480 686H490M480 742H490" class="k"/>
<path d="M564 684H643V738H595L578 755V738H564Z" fill="#fff" stroke="#1f77c0" stroke-width="4.500"/>
<path d="M697 677H735L760 700V756H697Z M735 677V700H760" class="k"/><circle cx="703" cy="707" r="7" fill="#5ea9e6" stroke="#1f77c0" stroke-width="2"/><path d="M716 708H748M712 728H737" stroke="#2b88d8" stroke-width="3"/>
<!-- row 7 -->
<path d="M76 805H122V835Q120 855 99 858Q78 855 76 835Z" fill="#fff" stroke="#444" stroke-width="4"/><rect x="76" y="803" width="46" height="8" fill="#5ea9e6"/><path d="M76 812H60Q60 838 80 845M122 812H138Q138 838 118 845M99 858V870" class="k"/><rect x="78" y="870" width="42" height="12" class="u"/>
<path d="M192 800H232L255 822V885H192Z M232 800V822H255" class="k"/><rect x="203" y="850" width="11" height="24" fill="#444"/><rect x="220" y="862" width="11" height="12" fill="#444"/><rect x="237" y="838" width="11" height="36" fill="#444"/>
<rect x="355" y="803" width="30" height="32" fill="#f3f2f1" stroke="#999" stroke-width="3"/><rect x="311" y="842" width="35" height="35" fill="#f3f2f1" stroke="#999" stroke-width="3"/><rect x="330" y="818" width="18" height="18" fill="#5ea9e6"/><use href="#fn" x="352" y="842"/><use href="#bolt" x="305" y="798"/>
<path d="M440 835V884H480M450 802H518V840" class="k"/><text x="472" y="866" font-size="42" text-anchor="middle" style="fill:#2b88d8">A</text><use href="#fn" x="478" y="842"/><use href="#bolt" x="431" y="798"/>
<path d="M563 845V884H605M575 802H644V840" class="k"/><path d="M605 825H630M595 853H610" stroke="#777" stroke-width="3"/><rect x="578" y="848" width="10" height="10" fill="none" stroke="#777" stroke-width="3"/><use href="#fn" x="604" y="842"/><use href="#bolt" x="557" y="798"/>
<rect x="689" y="813" width="81" height="60" fill="#fff" stroke="#444" stroke-width="4.500"/><path d="M693 870V855L715 832L745 860L755 848L768 860V870Z" fill="#62ade9" stroke="#1f77c0" stroke-width="2"/><circle cx="748" cy="826" r="5.500" fill="#e87400"/>
<!-- row 8 -->
<path d="M58 950V1008H140V990M75 930H140V970" fill="#fff" stroke="#1f77c0" stroke-width="4.500"/><path d="M85 965L105 945L135 938V958L115 980L125 1000H70L65 985Z" fill="#7bb8ea"/><path d="M55 925H78V955L66 968L55 955Z" fill="#d9720c"/><circle cx="128" cy="997" r="11" fill="#d9720c"/><circle cx="137" cy="975" r="6" fill="#d9720c"/>
<path d="M225 930L265 968L225 1008L185 968Z M205 949L245 988M245 949L205 988" fill="none" stroke="#a33db0" stroke-width="4.500"/>
<path d="M311 938H365L392 966L365 998H311L335 966Z M345 998L375 950" fill="#fff" stroke="#1f88d8" stroke-width="4.500"/>
<circle cx="450" cy="960" r="3.500" fill="#333"/><circle cx="477" cy="960" r="3.500" fill="#333"/><circle cx="504" cy="960" r="3.500" fill="#333"/>
</g>

<!-- viz lower -->
<line x1="1364" y1="735.500" x2="1634" y2="735.500" stroke="#e1dfdd" stroke-width="1.500"/>
<rect x="1624" y="739" width="8" height="145" rx="4" fill="#808080"/>
<text x="1381" y="766" font-size="17" textLength="50" style="fill:#323130">Values</text>
<rect x="1369.500" y="781.500" width="254" height="41" fill="#fff" stroke="#c8c6c4" stroke-dasharray="2 2"/>
<text x="1385" y="806" font-size="17.500" textLength="160" style="fill:#323130">Add data fields here</text>
<text x="1381" y="857" font-size="17.500" class="sem" textLength="105">Drill through</text>
<text x="1381" y="893" font-size="17" textLength="100" style="fill:#323130">Cross-report</text>
<rect x="1552.500" y="876.500" width="47" height="23" rx="11.500" fill="#fff" stroke="#888"/><circle cx="1565" cy="888" r="6" fill="#605e5c"/><text x="1574" y="893" font-size="13" textLength="20" style="fill:#605e5c">Off</text>
<text x="1381" y="933" font-size="17" textLength="111" style="fill:#323130">Keep all filters</text>
<rect x="1552" y="916" width="48" height="24" rx="12" fill="#117865"/><text x="1559" y="933" font-size="13" textLength="19" style="fill:#fff">On</text><ellipse cx="1587" cy="928" rx="5.500" ry="6.500" fill="#fff"/>

<!-- data pane -->
<text x="1647" y="267" font-size="22" class="sem" textLength="49">Data</text>
<path d="M1875 251L1883 259L1875 267M1883 251L1891 259L1883 267" fill="none" stroke="#333" stroke-width="1.800"/>
<path d="M1896 298.500H1647Q1641.500 298.500 1641.500 304V327Q1641.500 333 1647 333H1896" fill="#fff" stroke="#8a8886"/>
<circle cx="1668" cy="314" r="9" fill="none" stroke="#555" stroke-width="1.500"/><line x1="1674.500" y1="320.500" x2="1681" y2="327" stroke="#555" stroke-width="1.500"/>
<text x="1690" y="324" font-size="20" textLength="62" style="fill:#605e5c">Search</text>
<rect x="1886" y="346" width="10" height="560" fill="#808080"/>
<g clip-path="url(#trc)">
<g class="chev" style="stroke-width:1.400">
<polyline points="1654,362 1662,371 1670,362"/><polyline points="1654,578 1662,587 1670,578"/><polyline points="1654,866 1662,875 1670,866"/><polyline points="1682,683 1690,691 1682,699"/>
</g>
<g fill="none" stroke="#333" stroke-width="1.500"><path d="M1679 359H1695V375H1679ZM1684.500 359V375M1690 359V375M1679 364.500H1695M1679 370H1695"/><path d="M1679 575H1695V591H1679ZM1684.500 575V591M1690 575V591M1679 580.500H1695M1679 586H1695"/><path d="M1679 863H1695V879H1679ZM1684.500 863V879M1690 863V879M1679 868.500H1695M1679 874H1695"/></g>
<text x="1704" y="372.500" class="tr" textLength="82">customers</text><text x="1704" y="588.500" class="tr" textLength="50">orders</text><text x="1704" y="876.500" class="tr" textLength="70">products</text>
<g class="cb"><rect x="1700.500" y="394.500" width="17" height="17" rx="3"/><rect x="1700.500" y="430.500" width="17" height="17" rx="3"/><rect x="1700.500" y="466.500" width="17" height="17" rx="3"/><rect x="1700.500" y="502.500" width="17" height="17" rx="3"/><rect x="1700.500" y="538.500" width="17" height="17" rx="3"/><rect x="1700.500" y="610.500" width="17" height="17" rx="3"/><rect x="1700.500" y="646.500" width="17" height="17" rx="3"/><rect x="1700.500" y="682.500" width="17" height="17" rx="3"/><rect x="1700.500" y="718.500" width="17" height="17" rx="3"/><rect x="1700.500" y="754.500" width="17" height="17" rx="3"/><rect x="1700.500" y="790.500" width="17" height="17" rx="3"/><rect x="1700.500" y="826.500" width="17" height="17" rx="3"/><rect x="1700.500" y="898.500" width="17" height="17" rx="3"/><rect x="1700.500" y="934.500" width="17" height="17" rx="3"/></g>
<text x="1757" y="409" class="tr" textLength="30">City</text><text x="1757" y="445" class="tr" textLength="118">CountryRegion</text><text x="1757" y="481" class="tr" textLength="93">CustomerID</text><text x="1757" y="517" class="tr" textLength="47">Name</text><text x="1757" y="553" class="tr" textLength="88">PostalCode</text>
<text x="1757" y="625" class="tr" textLength="93">CustomerID</text><text x="1757" y="661" class="tr" textLength="83">OrderDate</text><text x="1757" y="697" class="tr" textLength="118">OrderDate Hi...</text><text x="1757" y="733" class="tr" textLength="99">OrderItemID</text><text x="1757" y="769" class="tr" textLength="79">ProductID</text><text x="1757" y="805" class="tr" textLength="67">Quantity</text><text x="1757" y="841" class="tr" textLength="66">Revenue</text><text x="1757" y="913" class="tr" textLength="72">Category</text><text x="1757" y="949" class="tr" textLength="79">ProductID</text>
<path d="M1733 678H1739V684H1733ZM1736 684V699H1743M1736 691H1743M1743 687H1750V694H1743ZM1743 695H1750V701H1743Z" fill="none" stroke="#444" stroke-width="1.300"/>
<path d="M1746 720H1732L1739 728L1732 736H1746" fill="none" stroke="#333" stroke-width="1.400"/>
<path d="M1746 792H1732L1739 800L1732 808H1746" fill="none" stroke="#333" stroke-width="1.400"/>
<path d="M1746 828H1732L1739 836L1732 844H1746" fill="none" stroke="#333" stroke-width="1.400"/>
</g>

<!-- page tabs -->
<rect x="63.500" y="921" width="27" height="19" fill="none" stroke="#555" stroke-width="1.600"/><path d="M77 940V945M71 945.500H83" stroke="#555" stroke-width="1.600"/>
<rect x="60" y="951" width="36" height="4" rx="2" fill="#117865"/>
<rect x="135.500" y="917" width="17" height="29" rx="2" fill="none" stroke="#555" stroke-width="1.600"/><rect x="143" y="941" width="2" height="2" fill="#555"/>
<polygon points="192,930 186,935.500 192,941" fill="#c8c6c4"/><polygon points="219,930 225,935.500 219,941" fill="#c8c6c4"/>
<rect x="236" y="909" width="114" height="53" fill="#fff"/><line x1="236.500" y1="909" x2="236.500" y2="962" stroke="#c8c6c4"/><rect x="236" y="956" width="114" height="6" fill="#117865"/>
<text x="267" y="942.500" font-size="17.500" class="sem" textLength="53">Page 1</text>
<rect x="350" y="909" width="59" height="53" fill="#117865"/><path d="M379.500 926V942M371 934H388" stroke="#fff" stroke-width="4.500"/>

<!-- status -->
<text x="-1" y="987.500" font-size="17" textLength="78" style="fill:#3b3a39">age 1 of 1</text>
<rect x="1586" y="980" width="5" height="2" fill="#555"/><line x1="1600" y1="981" x2="1750" y2="981" stroke="#777" stroke-width="1.300"/><rect x="1640" y="972" width="6" height="17" fill="#555"/><line x1="1675.500" y1="976" x2="1675.500" y2="986" stroke="#777"/>
<path d="M1764 975V987M1758 981H1770" stroke="#555" stroke-width="1.800"/>
<text x="1790" y="985" font-size="16" textLength="34" style="fill:#50616e">62%</text>
<rect x="1853" y="973" width="23" height="17" fill="#f9f9f9" stroke="#888" stroke-width="1.500"/><path d="M1857 980V977H1861M1868 977H1872V980M1857 983V986H1861M1868 986H1872V983" fill="none" stroke="#444" stroke-width="1.300"/>

<!-- taskbar -->
<text x="832" y="1040" font-size="60" font-weight="bold" textLength="215" style="fill:#dbdcd7;font-family:'DejaVu Sans',sans-serif">خطوات</text>
<path d="M18 1040Q14 1030 24 1028Q28 1018 40 1024Q48 1026 46 1032Q52 1036 48 1044Q44 1051 34 1051H22Q14 1048 18 1040Z" fill="#a5cbe9" stroke="#7fb0d9"/><path d="M16 1024Q24 1022 30 1016L36 1030Z" fill="#f0a92b"/>
<circle cx="42" cy="1020" r="12" fill="#c42b1c"/><text x="42" y="1026" font-size="16" text-anchor="middle" style="fill:#fff">3</text>
<rect x="410" y="1023" width="11" height="11" fill="#2ba3e8"/><rect x="422" y="1023" width="11" height="11" fill="#1f93dc"/><rect x="410" y="1035" width="11" height="11" fill="#1787d6"/><rect x="422" y="1035" width="11" height="11" fill="#0f78c9"/>
<rect x="452.500" y="1010.500" width="326" height="47" rx="23.500" fill="#f7f8f3" stroke="#cfd0c8" stroke-width="1.500"/>
<circle cx="477" cy="1031" r="9" fill="none" stroke="#333" stroke-width="2.200"/><line x1="483" y1="1038" x2="489" y2="1044" stroke="#333" stroke-width="2.500"/>
<text x="506" y="1042" font-size="19" textLength="61" style="fill:#555">Search</text>
<g clip-path="url(#scn)"><rect x="700" y="1012" width="80" height="46" fill="#cfe3ee"/><ellipse cx="738" cy="1027" rx="24" ry="5" fill="#7b93c9"/><ellipse cx="732" cy="1030" rx="30" ry="6" fill="#2c6a4c"/><rect x="700" y="1033" width="80" height="24" fill="#4f9a5c"/><path d="M745 1034L772 1032V1043L748 1044Z" fill="#e6ba42"/><path d="M715 1036Q745 1038 755 1042Q735 1044 745 1056H722Q720 1046 732 1042Q722 1040 715 1036Z" fill="#4a93cc"/><path d="M704 1056L710 1032L717 1056Z" fill="#143f28"/><path d="M714 1056L719 1040L724 1056Z" fill="#143f28"/><path d="M760 1056L766 1040L772 1056Z" fill="#1e5a34"/></g>
<rect x="795" y="1029" width="18" height="16" fill="#222"/><rect x="801" y="1022" width="17" height="16" fill="url(#tv)"/>
<!-- copilot -->
<path d="M844 1033Q843 1025 850 1023Q856 1022 859 1024L852 1043H851Q845 1042 844 1033Z" fill="url(#cop)"/><path d="M853 1024H860Q867 1026 867 1033Q867 1040 860 1043L852 1044Q857 1042 859 1036L860 1031Q859 1026 853 1024Z" fill="url(#cop2)"/><path d="M851 1030H859L857 1037Q855 1040 851 1039Z" fill="#eef0ea"/>
<!-- edge -->
<circle cx="904.500" cy="1034.500" r="12.500" fill="#1d82d2"/><path d="M892 1033A12.500 12.500 0 0 1 917 1036Q916 1041 911 1040Q907 1040 909 1035Q908 1030 902 1029Q895 1029 892 1033Z" fill="url(#edge)"/><path d="M895 1038Q895 1031 902 1031Q907 1032 906 1036Q900 1037 902 1042Q906 1047 912 1045Q906 1049 900 1046Q895 1043 895 1038Z" fill="#e9eee6"/>
<!-- store -->
<path d="M942 1031H965V1043Q965 1046 962 1046H945Q942 1046 942 1043Z" fill="#4a6d8c"/><path d="M942 1031L944 1027H963L965 1031Z" fill="#2f9bd6"/><path d="M949 1027V1024H958V1027" fill="none" stroke="#2f9bd6" stroke-width="1.500"/><rect x="949" y="1032" width="4" height="4" fill="#e85b3a"/><rect x="954" y="1032" width="4" height="4" fill="#7cbb3c"/><rect x="949" y="1037" width="4" height="4" fill="#2ba3e8"/><rect x="954" y="1037" width="4" height="4" fill="#f2b63d"/>
<!-- outlook -->
<path d="M999 1024H1012L1016 1034V1045H999Z" fill="#5f7fe0"/><path d="M1001 1024H1012L1016 1034H1004Z" fill="#3fa0e8"/><rect x="992" y="1030" width="14" height="15" rx="2" fill="#0f6cbd"/><circle cx="999" cy="1037.500" r="3.800" fill="none" stroke="#fff" stroke-width="1.600"/>
<!-- folder -->
<path d="M1046 1024H1056L1058 1027H1071V1045H1046Z" fill="#f6cd52"/><rect x="1046" y="1024" width="11" height="3" fill="#e59a2c"/><rect x="1051" y="1036" width="15" height="9" rx="1" fill="#4f9fd6"/>
<!-- teams -->
<circle cx="1125" cy="1023" r="4" fill="#7b83eb"/><circle cx="1117" cy="1026" r="5" fill="#5059c9"/><rect x="1105" y="1030" width="15" height="15" rx="1" fill="#4b53bc"/><path d="M1120 1031H1130V1042Q1128 1049 1120 1048Z" fill="#7b83eb"/><text x="1112.500" y="1042" font-size="11" font-weight="bold" text-anchor="middle" style="fill:#fff">T</text>
<g transform="translate(-.8,0)"><rect x="1170" y="1023" width="17" height="24" fill="#1f8e55"/><rect x="1178" y="1023" width="9" height="8" fill="#35b36f"/><rect x="1178" y="1039" width="9" height="8" fill="#0f6b3b"/><rect x="1163" y="1028" width="15" height="15" fill="#107c41"/><text x="1170.500" y="1040" font-size="12" font-weight="bold" text-anchor="middle" style="fill:#fff">X</text></g>
<g transform="translate(-1.200,0)"><rect x="1208" y="1004" width="41" height="60" rx="5" fill="#e9b2ac"/><rect x="1213" y="1058" width="30" height="5" rx="2.500" fill="#c42b1c"/>
<circle cx="1228" cy="1034" r="12" fill="#2a8bcf"/><path d="M1221 1034L1236 1027L1233 1042L1228 1037L1232 1031L1225 1036Z" fill="#fff"/><circle cx="1240" cy="1018" r="3" fill="#0a78d4"/></g>
<g transform="translate(-1.500,0)"><circle cx="1279" cy="1035" r="11" fill="#fff" stroke="#1c8a4c" stroke-width="2.500"/><path d="M1272 1048L1274 1042L1278 1046Z" fill="#1c8a4c"/><path d="M1275 1030Q1275 1036 1280 1039Q1283 1041 1285 1039" fill="none" stroke="#1c8a4c" stroke-width="2.500"/><circle cx="1291" cy="1019" r="3" fill="#0a78d4"/></g>
<g transform="translate(-1.700,0)"><rect x="1308" y="1006" width="39" height="58" rx="5" fill="#f5f6f2"/><rect x="1315" y="1022" width="25" height="25" fill="#0a6fb8"/><rect x="1319" y="1032" width="9" height="15" fill="#f2c94c"/><rect x="1326" y="1026" width="9" height="21" fill="url(#pbi)"/><rect x="1320" y="1058" width="15" height="5" rx="2.500" fill="#0a78d4"/></g>
<g fill="#777"><circle cx="904" cy="1060" r="2.500"/><circle cx="954" cy="1060" r="2.500"/><circle cx="1004" cy="1060" r="2.500"/><circle cx="1058" cy="1060" r="2.500"/><circle cx="1117" cy="1060" r="2.500"/><circle cx="1174" cy="1060" r="2.500"/><circle cx="1277.500" cy="1060" r="2.500"/></g>
<g transform="translate(-2.500,0)">
<path d="M1465 1037L1472 1029L1479 1037" fill="none" stroke="#222" stroke-width="1.800"/>
<path d="M1509 1040Q1505 1024 1521 1022M1531 1026Q1520 1018 1512 1026M1521 1018V1026H1529M1512 1046V1052H1520M1509 1042Q1514 1052 1520 1050" fill="none" stroke="#222" stroke-width="1.500"/><circle cx="1526" cy="1040" r="7" fill="#e0a12f"/>
<path d="M1562 1040Q1555 1034 1561 1028Q1566 1020 1575 1026Q1580 1030 1579 1034" fill="#bbb" stroke="#444" stroke-width="1.500"/><circle cx="1574" cy="1041" r="8.500" fill="#0a78d4"/><text x="1574" y="1046" font-size="12" font-weight="bold" text-anchor="middle" style="fill:#fff">i</text>
</g>
<g transform="translate(-3,0)">
<text x="1608" y="1042" font-size="17.500" textLength="34" style="fill:#333">ENG</text>
<g fill="none" stroke="#222" stroke-width="1.500"><path d="M1672 1027Q1683 1019 1694 1027M1675 1032Q1683 1026 1691 1032M1678 1037Q1683 1033 1688 1037"/><path d="M1709 1029V1039H1714L1722 1045V1023L1714 1029Z"/><path d="M1725 1027Q1729 1034 1725 1041M1729 1024Q1735 1034 1729 1044"/><rect x="1744" y="1025" width="28" height="16" rx="4"/></g><circle cx="1683" cy="1042" r="2.200" fill="#222"/><rect x="1748" y="1028" width="7" height="10" rx="1" fill="#333"/>
</g>
<text x="1876" y="1030" font-size="15" text-anchor="end" style="fill:#222;font-family:'DejaVu Sans',sans-serif">١١:٤١ م</text>
<text x="1876" y="1053" font-size="14" text-anchor="end" textLength="81" style="fill:#222;font-family:'DejaVu Sans',sans-serif">٢٠٢٦/٠١/٢٨</text>
</svg>
</body></html>
